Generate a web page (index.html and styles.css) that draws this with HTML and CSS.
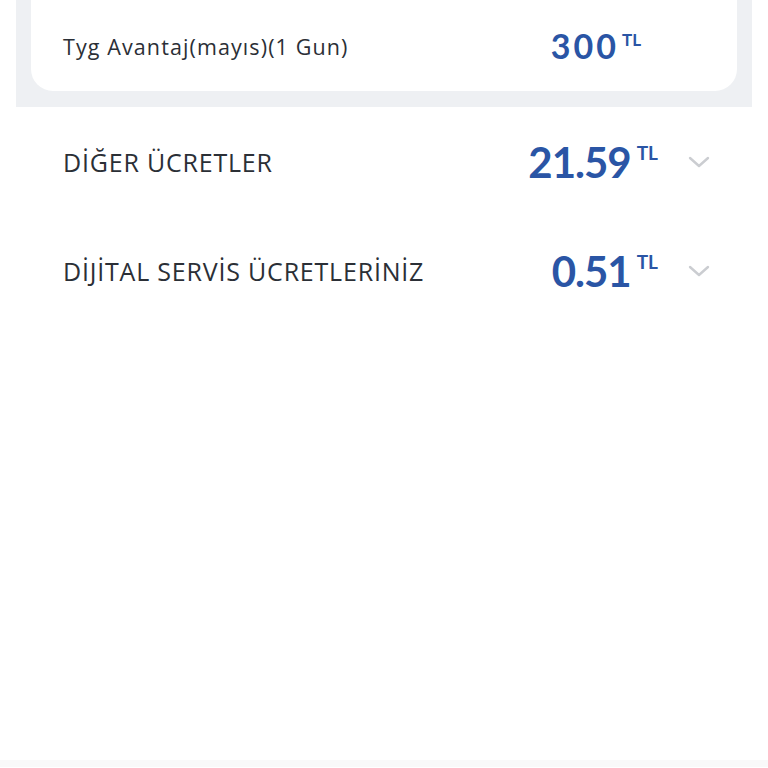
FILE: index.html
```html
<!DOCTYPE html>
<html lang="tr">
<head>
<meta charset="UTF-8">
<title>Fatura Detayı</title>
<meta name="viewport" content="width=device-width, initial-scale=1.0">
<link rel="stylesheet" href="styles.css">
</head>
<body>

<!-- Paket kartı -->
<div class="package-box">
    <div class="package-card">
        <span class="package-name">Tyg Avantaj(mayıs)(1 Gun)</span>
        <span class="amount amount-small">300<sup>TL</sup></span>
    </div>
</div>

<!-- Ücret satırları -->
<div class="fee-list">
    <div class="fee-row">
        <span class="fee-title">DİĞER ÜCRETLER</span>
        <span class="amount">21.59<sup>TL</sup></span>
        <svg class="chevron" viewBox="0 0 22 12" width="22" height="12"><path d="M2 2 L11 10 L20 2" fill="none" stroke="#cbcdd1" stroke-width="2.4" stroke-linecap="round" stroke-linejoin="round"/></svg>
    </div>
    <div class="fee-row">
        <span class="fee-title">DİJİTAL SERVİS ÜCRETLERİNİZ</span>
        <span class="amount">0.51<sup>TL</sup></span>
        <svg class="chevron" viewBox="0 0 22 12" width="22" height="12"><path d="M2 2 L11 10 L20 2" fill="none" stroke="#cbcdd1" stroke-width="2.4" stroke-linecap="round" stroke-linejoin="round"/></svg>
    </div>
</div>

<div class="bottom-strip"></div>

</body>
</html>
```

FILE: styles.css
```css
body {
    margin: 0;
    padding: 0;
    background: #fff;
    color: #2b2f36;
    font-family: "Open Sans", "Lato", sans-serif;
    height: 768px;
    display: flex;
    flex-direction: column;
}
.package-box {
    margin: 0 16px;
    padding: 0 15px 16px;
    background: #eef0f3;
}
.package-card {
    height: 91px;
    background: #fff;
    border-radius: 0 0 22px 22px;
    display: flex;
    align-items: center;
    padding: 0 32px;
    box-sizing: border-box;
}
.package-name {
    flex: 1;
    font-size: 21.5px;
    letter-spacing: 1.1px;
    padding-top: 1px;
}
.amount {
    font-family: "Lato", sans-serif;
    color: #2a55a5;
    font-weight: bold;
    font-size: 42px;
    letter-spacing: -1px;
    line-height: 1;
}
.amount sup {
    font-size: 19px;
    letter-spacing: 0;
    vertical-align: top;
    position: relative;
    top: 2px;
    margin-left: 6px;
}
.amount-small {
    font-size: 34px;
    letter-spacing: 3px;
    margin-right: 64px;
}
.amount-small sup {
    font-size: 17px;
    margin-left: 3px;
}
.fee-list {
    padding: 0 58px 0 63px;
    flex: 1;
}
.fee-row {
    display: flex;
    align-items: center;
    height: 109px;
}
.fee-title {
    flex: 1;
    font-size: 25px;
    letter-spacing: 0.8px;
}
.chevron {
    margin-left: 30px;
}
.bottom-strip {
    height: 7px;
    margin-bottom: 1px;
    background: #f9f9f9;
}
```
